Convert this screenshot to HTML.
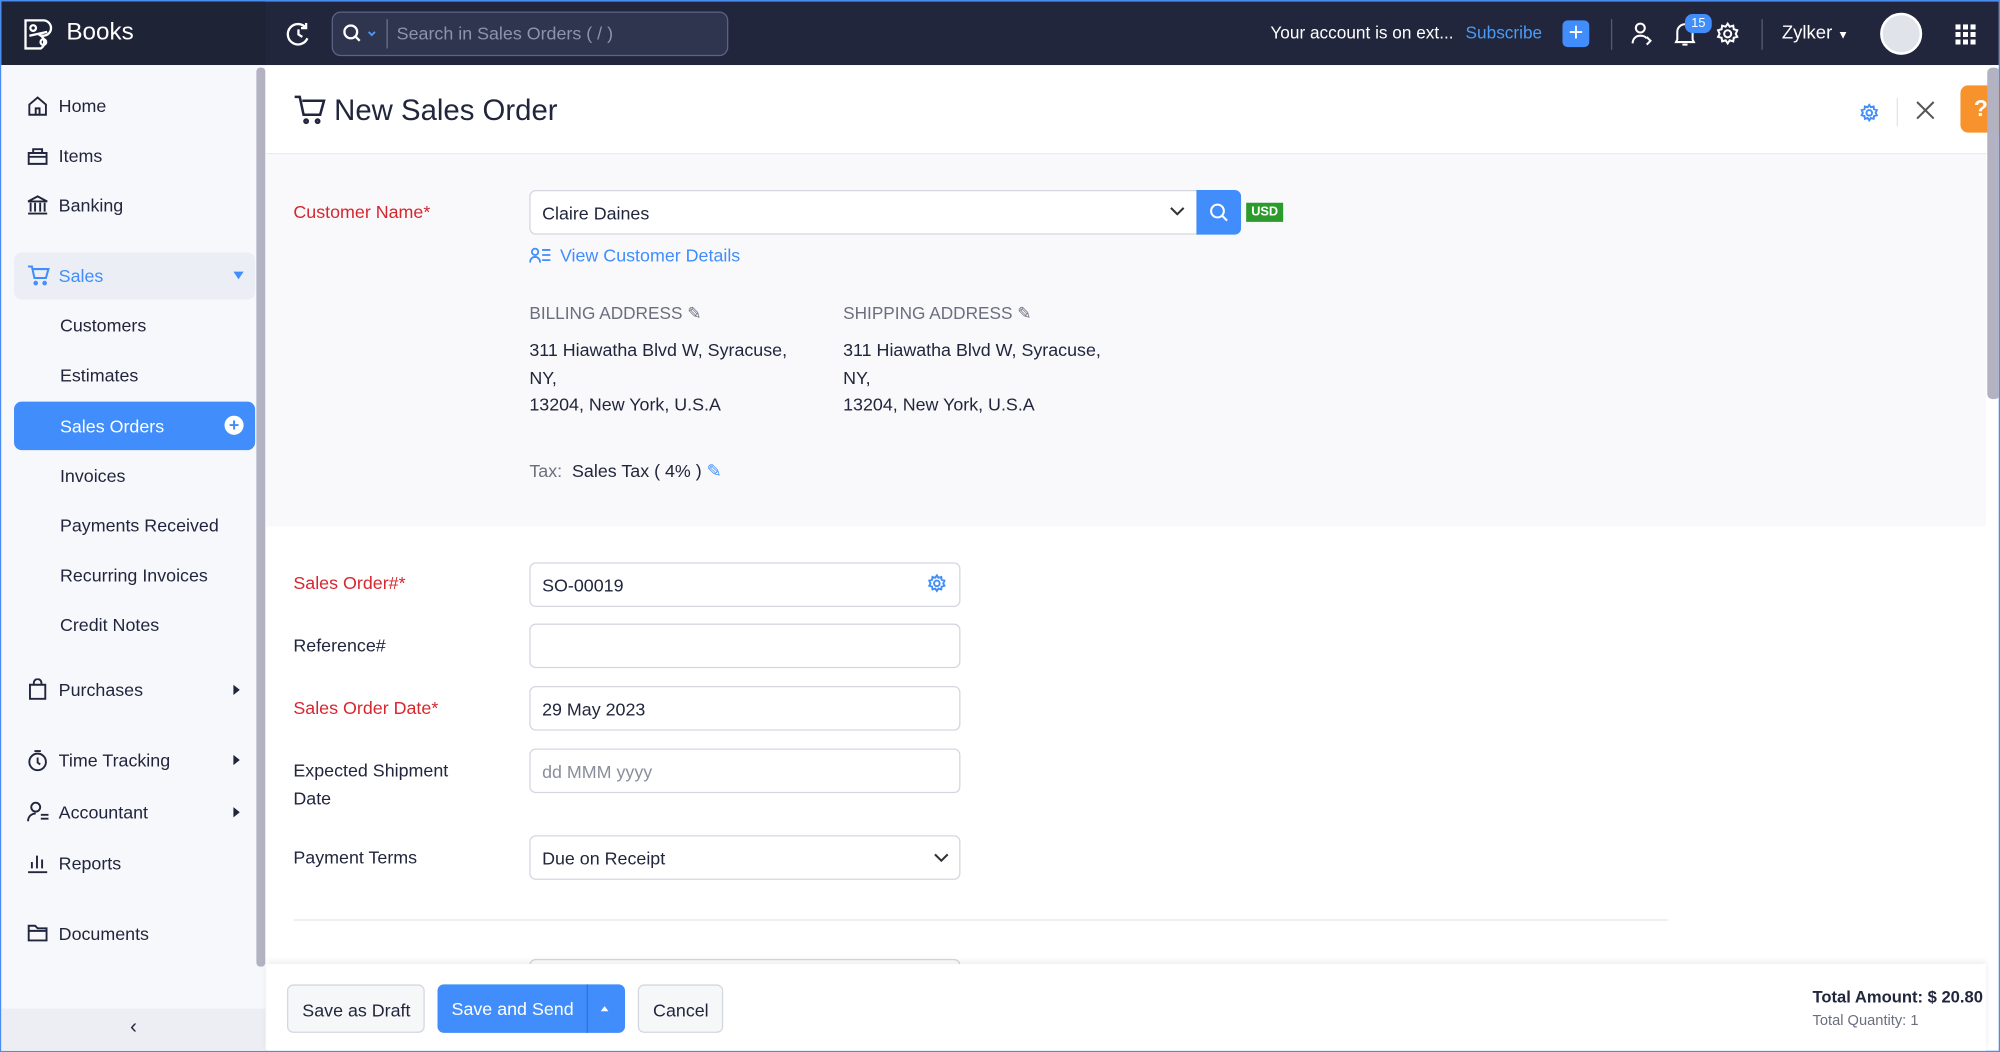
<!DOCTYPE html>
<html><head><meta charset="utf-8"><style>
*{box-sizing:border-box;margin:0;padding:0}
html,body{width:2000px;height:1052px;overflow:hidden;background:#fff}
#w{position:absolute;left:0;top:0;width:1568px;height:825px;transform:scale(1.27551,1.27515);transform-origin:0 0;font-family:"Liberation Sans",sans-serif;color:#21263c;overflow:hidden;border:1px solid #4a8cf0;white-space:nowrap}
.a{position:absolute}
.top{left:0;top:0;width:1568px;height:50px;background:#21263c}
.brand{left:0;top:0;width:207px;height:50px;background:#1f2336}
.wt{color:#fff}
.sb{left:0;top:50px;width:207px;height:775px;background:#f7f8fc}
.nav{position:absolute;left:45px;font-size:14px;color:#21263c}
.sub{position:absolute;left:46px;font-size:14px;color:#21263c}
.arr{position:absolute;left:182px;width:0;height:0;border-top:4px solid transparent;border-bottom:4px solid transparent;border-left:5px solid #21263c}
.lbl{position:absolute;left:229px;font-size:14px;color:#21263c}
.red{color:#d6262e}
.inp{position:absolute;left:414px;width:338px;height:35px;border:1px solid #d5d7e0;border-radius:5px;background:#fff;font-size:14px;padding:9px 9px;color:#21263c}
.btn{position:absolute;top:771px;height:38px;border:1px solid #d5d7e0;border-radius:5px;background:#f6f7f9;font-size:14px;padding:11px 11px;color:#21263c;white-space:nowrap}
svg{position:absolute}
.ic{fill:none;stroke:#21263c;stroke-width:1.5}
</style></head><body><div id="w">
<div class="a top"></div><div class="a brand"></div>
<svg style="left:17px;top:13px" width="26" height="26" viewBox="0 0 26 26" fill="none" stroke="#fff" stroke-width="1.8"><path d="M2 2h14a6 6 0 0 1 0 12h-2a6 6 0 0 1 0 10H2z"/><circle cx="8" cy="8" r="2.2"/><circle cx="16" cy="19" r="2.2"/><path d="M5 14l14-3"/></svg>
<div class="a wt" style="left:51px;top:14px;font-size:19px">Books</div>
<svg style="left:223px;top:16px" width="20" height="20" viewBox="0 0 20 20" fill="none" stroke="#fff" stroke-width="1.8"><path d="M16 5A8 8 0 1 0 17 13"/><path d="M16 1v4h-4"/><path d="M10 6v4l3 2"/></svg>
<div class="a" style="left:259px;top:8px;width:311px;height:35px;border:1px solid #5c6385;border-radius:7px;background:#30354f"></div>
<svg style="left:268px;top:18px" width="26" height="16" viewBox="0 0 26 16" fill="none" stroke="#fff" stroke-width="1.8"><circle cx="6" cy="6" r="5"/><path d="M10 10l3 3"/><path d="M20 6l2.5 2.5L25 6" stroke="#4a9bf5" stroke-width="1.4"/></svg>
<div class="a" style="left:302px;top:14px;width:1px;height:23px;background:#6b7191"></div>
<div class="a" style="left:310px;top:17px;font-size:14px;color:#8e93ad">Search in Sales Orders ( / )</div>
<div class="a wt" style="left:995px;top:17px;font-size:13.5px">Your account is on ext...</div>
<div class="a" style="left:1148px;top:17px;font-size:13.5px;color:#4a9bf5">Subscribe</div>
<div class="a" style="left:1224px;top:15px;width:21px;height:21px;background:#408dfb;border-radius:4px;color:#fff;font-size:20px;line-height:20px;text-align:center">+</div>
<div class="a" style="left:1262px;top:14px;width:1px;height:24px;background:#555b77"></div>
<svg style="left:1278px;top:16px" width="18" height="19" viewBox="0 0 18 19" fill="none" stroke="#fff" stroke-width="1.6"><circle cx="7" cy="5" r="3.5"/><path d="M1 17c0-4 3-6 6-6s4 1 5 2M12 12l3 3-3 3"/></svg>
<svg style="left:1311px;top:16px" width="18" height="20" viewBox="0 0 18 20" fill="none" stroke="#fff" stroke-width="1.6"><path d="M3 14V8a6 6 0 0 1 12 0v6l1 2H2zM7 18h4"/></svg>
<div class="a" style="left:1320px;top:10px;width:21px;height:15px;background:#408dfb;border-radius:6px;color:#fff;font-size:10px;text-align:center;line-height:15px">15</div>
<svg style="left:1344px;top:16px" width="19" height="19" viewBox="0 0 24 24" fill="none" stroke="#fff" stroke-width="2"><circle cx="12" cy="12" r="3.5"/><path d="M12 2l2 3 3.5-1 .5 3.5 3.5 1-1.5 3.5 1.5 3-3.5 1-.5 3.5-3.5-1-2 3-2-3-3.5 1-.5-3.5-3.5-1 1.5-3-1.5-3.5 3.5-1L6.5 4 10 5z"/></svg>
<div class="a" style="left:1380px;top:14px;width:1px;height:24px;background:#555b77"></div>
<div class="a wt" style="left:1396px;top:17px;font-size:14.5px">Zylker <span style="font-size:9px">▼</span></div>
<div class="a" style="left:1473px;top:9px;width:33px;height:33px;border-radius:50%;background:#e1e3ea;border:2px solid #fff"></div>
<div class="a" style="left:1532px;top:18px;width:16px;height:16px;background:repeating-linear-gradient(90deg,#fff 0 4px,transparent 4px 6px);-webkit-mask:repeating-linear-gradient(0deg,#000 0 4px,transparent 4px 6px);mask:repeating-linear-gradient(0deg,#000 0 4px,transparent 4px 6px)"></div>

<div class="a sb"></div>
<div class="a" style="left:200px;top:52px;width:7px;height:705px;background:#b2b2c2;border-radius:3px"></div>
<div class="a" style="left:0;top:790px;width:207px;height:35px;background:#eceef4"></div>
<div class="a" style="left:101px;top:796px;font-size:16px;color:#21263c">‹</div>
<svg style="left:20px;top:74px" width="17" height="16" viewBox="0 0 17 16" class="ic"><path d="M2 7l6.5-5.5L15 7v8H2zM7 15v-5h3v5"/></svg>
<div class="nav" style="top:74px">Home</div>
<svg style="left:20px;top:114px" width="17" height="15" viewBox="0 0 17 15" class="ic"><path d="M1.5 5h14v8.5h-14zM5 5V2h7v3M1.5 8h14"/></svg>
<div class="nav" style="top:113px">Items</div>
<svg style="left:20px;top:152px" width="17" height="16" viewBox="0 0 17 16" class="ic"><path d="M1 5l7.5-4L16 5zM3 6v7M6.5 6v7M10.5 6v7M14 6v7M1 14.5h15"/></svg>
<div class="nav" style="top:152px">Banking</div>
<div class="a" style="left:10px;top:197px;width:189px;height:37px;background:#eceef6;border-radius:6px"></div>
<svg style="left:20px;top:207px" width="18" height="16" viewBox="0 0 18 16" fill="none" stroke="#408dfb" stroke-width="1.6"><path d="M1 1h3l2 9h9l2-7H5"/><circle cx="7" cy="14" r="1"/><circle cx="14" cy="14" r="1"/></svg>
<div class="nav" style="top:207px;color:#408dfb">Sales</div>
<div class="a" style="left:182px;top:212px;border-left:4px solid transparent;border-right:4px solid transparent;border-top:6px solid #408dfb"></div>
<div class="sub" style="top:246px">Customers</div>
<div class="sub" style="top:285px">Estimates</div>
<div class="a" style="left:10px;top:314px;width:189px;height:38px;background:#408dfb;border-radius:6px"></div>
<div class="sub" style="top:325px;color:#fff">Sales Orders</div>
<div class="a" style="left:175px;top:325px;width:15px;height:15px;border-radius:50%;background:#fff;color:#408dfb;font-size:14px;line-height:14px;text-align:center;font-weight:bold">+</div>
<div class="sub" style="top:364px">Invoices</div>
<div class="sub" style="top:403px">Payments Received</div>
<div class="sub" style="top:442px">Recurring Invoices</div>
<div class="sub" style="top:481px">Credit Notes</div>
<svg style="left:21px;top:531px" width="15" height="17" viewBox="0 0 15 17" class="ic"><path d="M1.5 5h12v11h-12zM4.5 5V3.5a3 3 0 0 1 6 0V5"/></svg>
<div class="nav" style="top:532px">Purchases</div><div class="arr" style="top:536px"></div>
<svg style="left:20px;top:587px" width="17" height="17" viewBox="0 0 17 17" class="ic"><circle cx="8.5" cy="9.5" r="6.5"/><path d="M8.5 6v4l2 1.5M6 1h5"/></svg>
<div class="nav" style="top:587px">Time Tracking</div><div class="arr" style="top:591px"></div>
<svg style="left:20px;top:627px" width="18" height="17" viewBox="0 0 18 17" class="ic"><circle cx="7" cy="5" r="3.5"/><path d="M1 16c0-4 3-6 6-6M11 14h6M11 11h6"/></svg>
<div class="nav" style="top:628px">Accountant</div><div class="arr" style="top:632px"></div>
<svg style="left:20px;top:667px" width="17" height="17" viewBox="0 0 17 17" class="ic" style="stroke-width:1.8"><path d="M1 16h15M4 13V8M8 13V3M12 13V6"/></svg>
<div class="nav" style="top:668px">Reports</div>
<svg style="left:20px;top:723px" width="17" height="15" viewBox="0 0 17 15" class="ic"><path d="M1.5 2h5l2 2h7v9.5h-14zM1.5 6h14"/></svg>
<div class="nav" style="top:723px">Documents</div>

<div class="a" style="left:208px;top:119px;width:1348px;height:293px;background:#f9f9fb;border-top:1px solid #ebecf0"></div>
<svg style="left:229px;top:73px" width="26" height="24" viewBox="0 0 26 24" fill="none" stroke="#21263c" stroke-width="2"><path d="M1 2h4l3 14h13l3-11H7"/><circle cx="10" cy="21" r="1.3"/><circle cx="19" cy="21" r="1.3"/></svg>
<div class="a" style="left:261px;top:72px;font-size:23px">New Sales Order</div>
<svg style="left:1457px;top:80px" width="15" height="15" viewBox="0 0 24 24" fill="none" stroke="#408dfb" stroke-width="2.4"><circle cx="12" cy="12" r="3.5"/><path d="M12 2l2 3 3.5-1 .5 3.5 3.5 1-1.5 3.5 1.5 3-3.5 1-.5 3.5-3.5-1-2 3-2-3-3.5 1-.5-3.5-3.5-1 1.5-3-1.5-3.5 3.5-1L6.5 4 10 5z"/></svg>
<div class="a" style="left:1486px;top:76px;width:1px;height:22px;background:#e3e4ea"></div>
<svg style="left:1501px;top:78px" width="15" height="15" viewBox="0 0 15 15" stroke="#555" stroke-width="1.6"><path d="M1 1l13 13M14 1L1 14"/></svg>
<div class="a" style="left:1536px;top:66px;width:32px;height:37px;background:#f7922d;border-radius:6px 0 0 6px;color:#fff;font-weight:bold;font-size:18px;text-align:center;line-height:37px">?</div>
<div class="a" style="left:1557px;top:52px;width:10px;height:260px;background:#b2b2c2;border-radius:4px"></div>

<div class="lbl red" style="top:157px">Customer Name*</div>
<div class="inp" style="top:148px;width:524px;border-radius:5px 0 0 5px">Claire Daines</div>
<svg style="left:916px;top:161px" width="12" height="8" viewBox="0 0 12 8" fill="none" stroke="#333" stroke-width="1.6"><path d="M1 1l5 5 5-5"/></svg>
<div class="a" style="left:937px;top:148px;width:35px;height:35px;background:#408dfb;border-radius:0 5px 5px 0"></div>
<svg style="left:947px;top:158px" width="15" height="15" viewBox="0 0 15 15" fill="none" stroke="#fff" stroke-width="1.6"><circle cx="6.5" cy="6.5" r="5"/><path d="M10 10l4 4"/></svg>
<div class="a" style="left:976px;top:158px;width:29px;height:15px;background:#2b9c2b;color:#fff;font-size:10px;font-weight:bold;text-align:center;line-height:15px">USD</div>
<svg style="left:414px;top:193px" width="17" height="13" viewBox="0 0 17 13" fill="none" stroke="#408dfb" stroke-width="1.4"><circle cx="4.5" cy="3.5" r="2.5"/><path d="M0.5 12c0-3 2-4.5 4-4.5s4 1.5 4 4.5M10 2h6.5M10 6h6.5M10 10h6.5"/></svg>
<div class="a" style="left:438px;top:191px;font-size:14px;color:#408dfb">View Customer Details</div>
<div class="a" style="left:414px;top:237px;font-size:13.5px;color:#6b6e7e">BILLING ADDRESS ✎</div>
<div class="a" style="left:660px;top:237px;font-size:13.5px;color:#6b6e7e">SHIPPING ADDRESS ✎</div>
<div class="a" style="left:414px;top:263px;font-size:14px;line-height:21.5px">311 Hiawatha Blvd W, Syracuse,<br>NY,<br>13204, New York, U.S.A</div>
<div class="a" style="left:660px;top:263px;font-size:14px;line-height:21.5px">311 Hiawatha Blvd W, Syracuse,<br>NY,<br>13204, New York, U.S.A</div>
<div class="a" style="left:414px;top:360px;font-size:14px"><span style="color:#6b6e7e">Tax:</span>&nbsp; Sales Tax ( 4% ) <span style="color:#408dfb">✎</span></div>

<div class="lbl red" style="top:448px">Sales Order#*</div>
<div class="inp" style="top:440px">SO-00019</div>
<svg style="left:726px;top:449px" width="15" height="15" viewBox="0 0 24 24" fill="none" stroke="#408dfb" stroke-width="2.4"><circle cx="12" cy="12" r="3.5"/><path d="M12 2l2 3 3.5-1 .5 3.5 3.5 1-1.5 3.5 1.5 3-3.5 1-.5 3.5-3.5-1-2 3-2-3-3.5 1-.5-3.5-3.5-1 1.5-3-1.5-3.5 3.5-1L6.5 4 10 5z"/></svg>
<div class="lbl" style="top:497px">Reference#</div>
<div class="inp" style="top:488px"></div>
<div class="lbl red" style="top:546px">Sales Order Date*</div>
<div class="inp" style="top:537px">29 May 2023</div>
<div class="lbl" style="top:592px;line-height:22px">Expected Shipment<br>Date</div>
<div class="inp" style="top:586px;color:#8a8d9c">dd MMM yyyy</div>
<div class="lbl" style="top:663px">Payment Terms</div>
<div class="inp" style="top:654px">Due on Receipt</div>
<svg style="left:731px;top:668px" width="12" height="8" viewBox="0 0 12 8" fill="none" stroke="#333" stroke-width="1.6"><path d="M1 1l5 5 5-5"/></svg>
<div class="a" style="left:229px;top:720px;width:1078px;height:1px;background:#e6e7ec"></div>
<div class="inp" style="top:751px"></div>

<div class="a" style="left:208px;top:755px;width:1348px;height:70px;background:#fff;box-shadow:0 -2px 5px rgba(0,0,0,.08)"></div>
<div class="btn" style="left:224px;width:108px">Save as Draft</div>
<div class="a" style="left:342px;top:771px;width:147px;height:38px;background:#408dfb;border-radius:5px"></div>
<div class="a" style="left:353px;top:782px;font-size:14px;color:#fff">Save and Send</div>
<div class="a" style="left:459px;top:771px;width:1px;height:38px;background:#2f73d6"></div>
<div class="a" style="left:470px;top:788px;border-left:3.5px solid transparent;border-right:3.5px solid transparent;border-bottom:4px solid #fff"></div>
<div class="btn" style="left:499px;width:67px">Cancel</div>
<div class="a" style="left:1420px;top:773px;font-size:13px;font-weight:bold">Total Amount: $ 20.80</div>
<div class="a" style="left:1420px;top:794px;font-size:11.5px;color:#6b6e7e">Total Quantity: 1</div>
</div></body></html>
